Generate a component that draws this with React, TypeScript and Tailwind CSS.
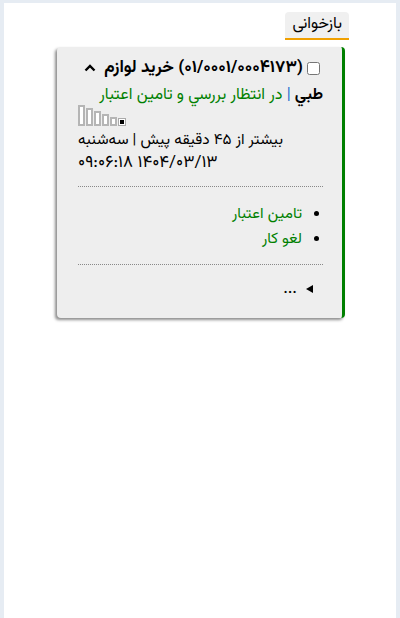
import React from "react";

export default function App() {
  const bars = [
    { h: 21, fill: false },
    { h: 18, fill: false },
    { h: 15, fill: false },
    { h: 12, fill: false },
    { h: 9, fill: false },
    { h: 8, fill: true },
  ];
  return (
    <div
      className="min-h-screen bg-[#e6ecf3] px-[4px] pt-[3px]"
      style={{ fontFamily: 'Vazirmatn, "DejaVu Sans", sans-serif' }}
    >
      <div className="min-h-[615px] bg-white" dir="rtl">
        <div className="w-[292px] mr-[47px] pt-[9px]">
          <div className="flex">
            <button className="h-[28px] px-[7px] bg-[#f0f0f0] rounded-t-[4px] border-b-2 border-[#f0a000] text-[16px] text-black leading-none">
              بازخوانی
            </button>
          </div>
          <div className="mt-[7px] w-[288px] mr-[4px] bg-[#eeeeee] border-r-[3px] border-r-[#008000] rounded-[4px] shadow-[-2px_2px_3px_rgba(0,0,0,0.45)] pr-[19px] pl-[21px] pt-[12px] pb-[20px] text-[17px] text-black">
            <div className="flex items-center font-bold leading-[18px] whitespace-nowrap">
              <input type="checkbox" className="w-[13px] h-[13px] m-0 mr-[3px] ml-[4px]" />
              <span>(۰۱/۰۰۰۱/۰۰۰۴۱۷۳) خرید لوازم</span>
              <svg width="12" height="8" viewBox="0 0 12 8" className="mr-[8px]">
                <path d="M1.5 6.5 L6 2 L10.5 6.5" stroke="black" strokeWidth="2.4" fill="none" />
              </svg>
            </div>
            <div className="mt-[10px] leading-[18px] text-[16px]">
              <span className="font-bold">طبي</span>
              <span className="text-[#1e6fd0]"> | </span>
              <span className="text-[#008000]">در انتظار بررسي و تامين اعتبار</span>
            </div>
            <div className="flex justify-start items-end gap-[1px] h-[21px]" dir="ltr">
              {bars.map((b, i) => (
                <div
                  key={i}
                  className={
                    b.fill
                      ? "w-[8px] border border-[#aaaaaa] bg-white p-[1px]"
                      : "w-[7px] border-2 border-[#b5b5b5] bg-white"
                  }
                  style={{ height: b.h }}
                >
                  {b.fill && <div className="w-full h-full bg-black" />}
                </div>
              ))}
            </div>
            <div className="mt-[4px] text-left">
              <div className="text-[15.3px] leading-[20px]">بیشتر از ۴۵ دقیقه پیش | سه‌شنبه</div>
              <div className="mt-[2px] leading-[22px]">۱۴۰۴/۰۳/۱۳ ۰۹:۰۶:۱۸</div>
            </div>
            <div className="mt-[12px] border-t border-dotted border-[#888888]" />
            <ul className="list-disc pr-[21px] mt-[15px] text-[#008000] text-[15.3px] leading-[25px] marker:text-black">
              <li>تامین اعتبار</li>
              <li>لغو کار</li>
            </ul>
            <div className="mt-[12px] border-t border-dotted border-[#888888]" />
            <div className="mt-[15px] flex items-center gap-[9px] pr-[10px] leading-[18px]">
              <svg width="7" height="8" viewBox="0 0 7 8">
                <path d="M0 4 L7 0 L7 8 Z" fill="black" />
              </svg>
              <span>...</span>
            </div>
          </div>
        </div>
      </div>
    </div>
  );
}
